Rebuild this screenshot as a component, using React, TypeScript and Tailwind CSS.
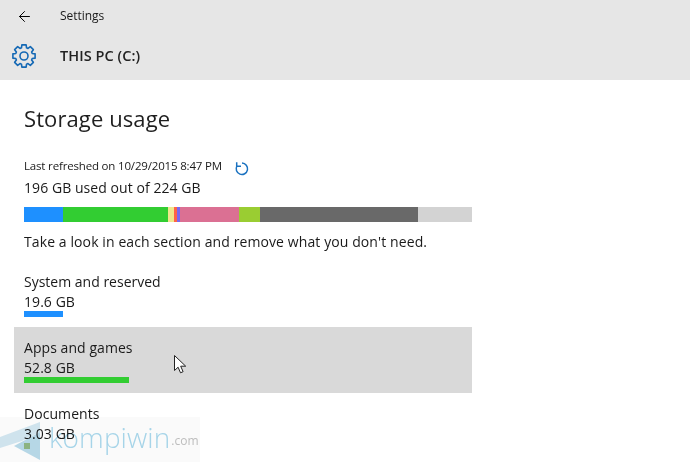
import { ArrowLeft } from "lucide-react";

const segments = [
  { width: "w-[39px]", color: "bg-[#1e90ff]" },
  { width: "w-[105px]", color: "bg-[#32cd32]" },
  { width: "w-[6px]", color: "bg-[#f0e68c]" },
  { width: "w-[3px]", color: "bg-[#ff6347]" },
  { width: "w-[3px]", color: "bg-[#7b68ee]" },
  { width: "w-[59px]", color: "bg-[#db7093]" },
  { width: "w-[21px]", color: "bg-[#9acd32]" },
  { width: "w-[158px]", color: "bg-[#696969]" },
  { width: "w-[54px]", color: "bg-[#d3d3d3]" },
];

// 8 teeth, traced around the centre
function gearPath() {
  const pts: string[] = [];
  const c = 12;
  for (let i = 0; i < 8; i++) {
    const a = (i * Math.PI) / 4;
    const steps: [number, number][] = [
      [8.6, -0.3],
      [11.3, -0.19],
      [11.3, 0.19],
      [8.6, 0.3],
    ];
    for (const [r, da] of steps) {
      pts.push(`${(c + r * Math.cos(a + da)).toFixed(2)} ${(c + r * Math.sin(a + da)).toFixed(2)}`);
    }
  }
  return `M${pts.join("L")}z`;
}

function GearIcon() {
  return (
    <svg width="24" height="24" viewBox="0 0 24 24" fill="none" stroke="#1569b5" strokeWidth="1.6" strokeLinejoin="round">
      <circle cx="12" cy="12" r="4" />
      <path d={gearPath()} />
    </svg>
  );
}

function RefreshIcon() {
  return (
    <svg className="ml-[12px] mt-[6px]" width="16" height="16" viewBox="0 0 16 16" fill="none" stroke="#1b72c0" strokeWidth="1.5">
      <path d="M8 2.1A5.7 5.7 0 1 1 2.9 5" />
      <path d="M2.7 1.2V5.2H7" />
    </svg>
  );
}

function Cursor() {
  return (
    <svg className="absolute left-[174px] top-[355px]" width="14" height="20" viewBox="0 0 14 20">
      <path d="M.5.5v15l3.6-3.3 2.4 5.6 2.6-1.1-2.4-5.5h5z" fill="#fff" stroke="#222" strokeWidth="1" />
    </svg>
  );
}

function Watermark() {
  return (
    <div className="absolute left-0 top-[417px] flex h-[45px] w-[200px] items-center overflow-hidden bg-[#fafafa] mix-blend-multiply">
      <svg className="shrink-0" width="47" height="45" viewBox="0 0 47 45">
        <path d="M0 20 L40 5 V15 L22 24 L0 31z" fill="#cfe3ed" />
        <path d="M14 29 L40 15 V43z" fill="#b6d7e6" />
      </svg>
      <span className="mb-[6px] ml-[2px] text-[28px] font-light leading-none text-[#a6d4e8]">kompiwin</span>
      <span className="ml-[1px] mt-[2px] text-[12px] text-[#bdbdbd]">.com</span>
    </div>
  );
}

export default function App() {
  return (
    <div className="relative h-[462px] w-[690px] overflow-hidden bg-white font-['Open_Sans',sans-serif] text-[14px] tracking-[0.06px] text-[#1a1a1a]">
      <header className="h-[80px] bg-[#e6e6e6]">
        <div className="flex h-[32px] items-center">
          <div className="flex w-[60px] justify-center pr-[12px]">
            <ArrowLeft size={17} strokeWidth={1.4} className="text-black" />
          </div>
          <span className="text-[12px] tracking-[-0.05px]">Settings</span>
        </div>
        <div className="flex h-[48px] items-center">
          <div className="flex w-[60px] pl-[12px]">
            <GearIcon />
          </div>
          <span className="text-[14.5px] font-semibold text-[#222222]">THIS PC (C:)</span>
        </div>
      </header>

      <main className="pl-[24px]">
        <h1 className="mt-[23px] text-[22px] leading-[30px] tracking-[0.1px] text-[#1f1f1f]">Storage usage</h1>

        <div className="mt-[23px] flex h-[20px] items-center text-[11.5px] tracking-[-0.17px]">
          <span>Last refreshed on 10/29/2015 8:47 PM</span>
          <RefreshIcon />
        </div>
        <p className="mt-[2px] h-[20px] leading-[20px]">196 GB used out of 224 GB</p>

        <div className="mt-[9px] flex h-[15px] w-[448px]">
          {segments.map((s) => (
            <div key={s.color} className={`${s.width} ${s.color}`} />
          ))}
        </div>

        <p className="mt-[10px] h-[20px] leading-[20px] tracking-[0.1px]">Take a look in each section and remove what you don't need.</p>

        <div className="mt-[20px] h-[55px]">
          <p className="h-[20px] leading-[20px] tracking-[0px]">System and reserved</p>
          <p className="h-[20px] leading-[20px]">19.6 GB</p>
          <div className="-mt-[1px] h-[6px] w-[39px] bg-[#1e90ff]" />
        </div>

        <div className="-ml-[10px] h-[66px] w-[458px] bg-[#d9d9d9] pl-[10px] pt-[11px]">
          <p className="h-[20px] leading-[20px]">Apps and games</p>
          <p className="h-[20px] leading-[20px]">52.8 GB</p>
          <div className="-mt-[1px] h-[6px] w-[105px] bg-[#32cd32]" />
        </div>

        <div className="mt-[11px]">
          <p className="h-[20px] leading-[20px]">Documents</p>
          <p className="h-[20px] leading-[20px]">3.03 GB</p>
          <div className="-mt-[1px] h-[6px] w-[6px] bg-[#c4d58f]" />
        </div>
      </main>

      <Watermark />
      <Cursor />
    </div>
  );
}
